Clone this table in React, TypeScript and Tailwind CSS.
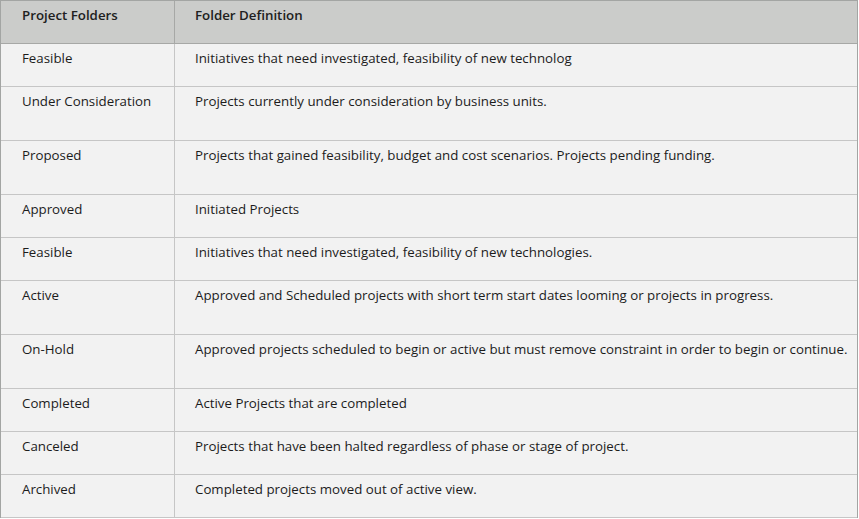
const rows: { name: string; def: string; tall?: boolean }[] = [
  { name: 'Feasible', def: 'Initiatives that need investigated, feasibility of new technolog' },
  { name: 'Under Consideration', def: 'Projects currently under consideration by business units.', tall: true },
  { name: 'Proposed', def: 'Projects that gained feasibility, budget and cost scenarios. Projects pending funding.', tall: true },
  { name: 'Approved', def: 'Initiated Projects' },
  { name: 'Feasible', def: 'Initiatives that need investigated, feasibility of new technologies.' },
  { name: 'Active', def: 'Approved and Scheduled projects with short term start dates looming or projects in progress.', tall: true },
  { name: 'On-Hold', def: 'Approved projects scheduled to begin or active but must remove constraint in order to begin or continue.', tall: true },
  { name: 'Completed', def: 'Active Projects that are completed' },
  { name: 'Canceled', def: 'Projects that have been halted regardless of phase or stage of project.' },
  { name: 'Archived', def: 'Completed projects moved out of active view.' },
];

export default function App() {
  return (
    <div className="w-[859px] h-[519px] bg-white font-['Open_Sans',sans-serif] text-[13.3px] leading-4 text-[#1c1c1c]">
      <div className="w-[858px] border-t border-l border-r border-[#a3a5a3]">
        <div className="grid grid-cols-[174px_1fr] h-[43px] bg-[#cbccca] border-b border-[#a7a8a6] font-semibold text-[#202020]">
          <div className="border-r border-[#a7a8a6] pl-[21px] pt-[6px]">Project Folders</div>
          <div className="pl-[20px] pt-[6px]">Folder Definition</div>
        </div>
        {rows.map((row, i) => (
          <div
            key={i}
            className={`grid grid-cols-[174px_1fr] bg-[#f2f2f2] border-b border-[#c6c6c6] ${row.tall ? 'h-[54px]' : 'h-[43px]'}`}
          >
            <div className="border-r border-[#c6c6c6] pl-[21px] pt-[6px]">{row.name}</div>
            <div className="pl-[20px] pt-[6px] whitespace-nowrap">{row.def}</div>
          </div>
        ))}
      </div>
    </div>
  );
}
